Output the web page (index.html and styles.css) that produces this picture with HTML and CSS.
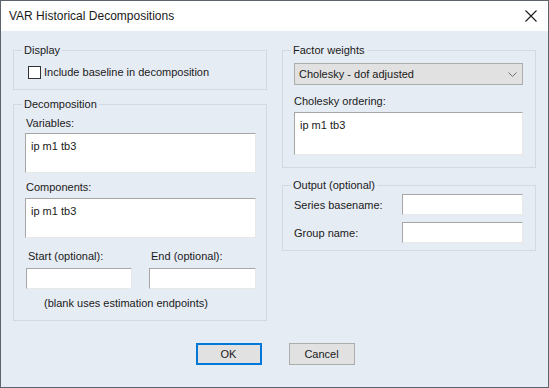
FILE: index.html
```html
<!DOCTYPE html>
<html>
<head>
<meta charset="utf-8">
<link rel="stylesheet" href="styles.css">
</head>
<body>
<div class="window">
  <div class="titlebar">
    <span class="title">VAR Historical Decompositions</span>
    <svg class="close" width="12" height="12" viewBox="0 0 12 12"><path d="M0.5 0.5 L11.5 11.5 M11.5 0.5 L0.5 11.5" stroke="#1a1a1a" stroke-width="1.1" fill="none"/></svg>
  </div>
  <div class="content">
    <div class="columns">
      <div class="col">
        <fieldset class="group display">
          <legend>Display</legend>
          <label class="check"><span class="box"></span><span>Include baseline in decomposition</span></label>
        </fieldset>
        <fieldset class="group decomp">
          <legend>Decomposition</legend>
          <div class="lbl lbl-vars">Variables:</div>
          <div class="textarea ta-vars">ip m1 tb3</div>
          <div class="lbl lbl-comp">Components:</div>
          <div class="textarea ta-comp">ip m1 tb3</div>
          <div class="range">
            <div class="lbl rl">Start (optional):</div>
            <div class="lbl rl">End (optional):</div>
            <div class="input"></div>
            <div class="input"></div>
          </div>
          <div class="note">(blank uses estimation endpoints)</div>
        </fieldset>
      </div>
      <div class="col">
        <fieldset class="group factor">
          <legend>Factor weights</legend>
          <div class="select"><span>Cholesky - dof adjusted</span>
            <svg width="9" height="5" viewBox="0 0 9 5"><path d="M0.5 0.5 L4.5 4.5 L8.5 0.5" stroke="#707070" stroke-width="1" fill="none"/></svg>
          </div>
          <div class="lbl lbl-ord">Cholesky ordering:</div>
          <div class="textarea ta-ord">ip m1 tb3</div>
        </fieldset>
        <fieldset class="group output">
          <legend>Output (optional)</legend>
          <div class="orow">
            <span class="lbl">Series basename:</span>
            <div class="input"></div>
          </div>
          <div class="orow second">
            <span class="lbl">Group name:</span>
            <div class="input"></div>
          </div>
        </fieldset>
      </div>
    </div>
    <div class="buttons">
      <div class="btn default">OK</div>
      <div class="btn">Cancel</div>
    </div>
  </div>
</div>
</body>
</html>
```
FILE: styles.css
```css
* { box-sizing: border-box; }
html, body { margin: 0; padding: 0; }
body {
  font-family: "Liberation Sans", Arial, sans-serif;
  font-size: 11px;
  color: #1a1a1a;
  background: #e6ecf4;
}
.window {
  width: 549px;
  height: 388px;
  border: 1px solid #5d636b;
  background: #e6ecf4;
  display: flex;
  flex-direction: column;
}
.titlebar {
  height: 30px;
  background: #ffffff;
  display: flex;
  align-items: center;
  justify-content: space-between;
  padding: 0 10px 0 8px;
}
.title { font-size: 12px; color: #1a1a1a; }
.close { margin-right: 1px; }
.content {
  padding: 12px 11px 0 12px;
}
.columns {
  display: grid;
  grid-template-columns: 254px 254px;
  column-gap: 15px;
}
.col { display: flex; flex-direction: column; }
.group {
  margin: 0;
  min-width: 0;
  border: 1px solid #d2d9e3;
  padding: 0 10px 0 11px;
}
.group legend {
  padding: 0 2px;
  margin-left: -3px;
  line-height: 14px;
  height: 14px;
}
.lbl { line-height: 14px; height: 14px; white-space: nowrap; }
.display { padding-top: 8px; padding-bottom: 10px; }
.check { display: flex; align-items: center; gap: 3px; padding-left: 3px; height: 14px; }
.box {
  width: 13px; height: 13px;
  border: 1px solid #333333;
  background: #ffffff;
}
.decomp { margin-top: 7px; padding-bottom: 10px; }
.lbl-vars { margin-top: 5px; padding-left: 1px; }
.textarea {
  background: #ffffff;
  border-top: 1px solid #a6a6a6;
  border-left: 1px solid #a6a6a6;
  border-right: 1px solid #e8e8e8;
  border-bottom: 1px solid #e8e8e8;
  padding: 5px 5px;
  line-height: 14px;
  height: 40px;
}
.ta-vars { margin-top: 3px; }
.lbl-comp { margin-top: 7px; padding-left: 1px; }
.ta-comp { margin-top: 4px; }
.range {
  display: grid;
  grid-template-columns: 106px 107px;
  column-gap: 17px;
  row-gap: 5px;
  margin-top: 11px;
  padding-left: 1px;
}
.rl { padding-left: 2px; }
.input {
  background: #ffffff;
  border-top: 1px solid #a6a6a6;
  border-left: 1px solid #a6a6a6;
  border-right: 1px solid #e8e8e8;
  border-bottom: 1px solid #e8e8e8;
  height: 21px;
}
.note { margin-top: 7px; line-height: 14px; padding-left: 19px; }
.factor { padding-bottom: 12px; padding-right: 12px; }
.select {
  margin-top: 6px;
  height: 22px;
  background: #e1e1e1;
  border: 1px solid #adadad;
  display: flex;
  align-items: center;
  justify-content: space-between;
  padding: 0 5px 0 4px;
}
.lbl-ord { margin-top: 9px; }
.ta-ord { margin-top: 4px; height: 43px; }
.output { margin-top: 10px; padding-bottom: 7px; padding-right: 12px; }
.orow {
  display: grid;
  grid-template-columns: 1fr 121px;
  align-items: center;
  margin-top: 2px;
}
.orow.second { margin-top: 7px; }
.buttons {
  display: flex;
  justify-content: center;
  gap: 27px;
  margin-top: 22px;
}
.btn {
  width: 66px;
  height: 22px;
  background: #e1e1e1;
  border: 1px solid #adadad;
  display: flex;
  align-items: center;
  justify-content: center;
}
.btn.default { border: 2px solid #0078d7; }
```
